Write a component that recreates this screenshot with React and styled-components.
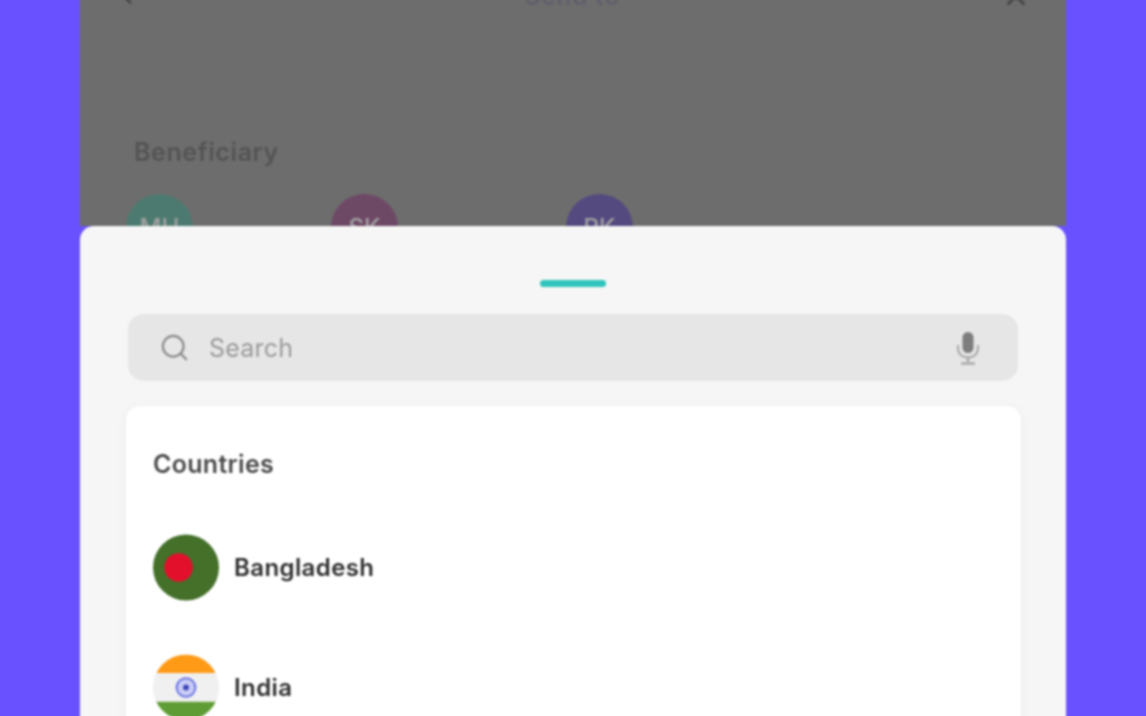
import React from 'react';
import styled, { createGlobalStyle } from 'styled-components';
import { ChevronLeft, Search, X } from 'lucide-react';

const GlobalStyle = createGlobalStyle`
    html, body {
        margin: 0;
        padding: 0;
        height: 716px;
        overflow: hidden;
        background: #6a51ff;
    }
    * {
        box-sizing: border-box;
    }
`;

const Page = styled.div`
    width: 1146px;
    height: 716px;
    overflow: hidden;
    background: #6a51ff;
    font-family: Inter, "Liberation Sans", sans-serif;
`;

/* taller than the page so the soft focus doesn't fringe the top and bottom edges */
const Stage = styled.div`
    height: 740px;
    margin-top: -12px;
    padding: 0 80px;
    background: #6a51ff;
    filter: blur(0.8px);
`;

const Phone = styled.div`
    width: 986px;
    height: 740px;
    display: flex;
    flex-direction: column;
`;

const Backdrop = styled.div`
    height: 238px;
    flex: none;
    overflow: hidden;
    background: #6d6d6d;
    padding: 0 35px 0 34px;
`;

const Header = styled.div`
    height: 24px;
    margin-top: -4px;
    display: flex;
    align-items: center;
    justify-content: space-between;
    color: #474747;
`;

const Title = styled.div`
    font-size: 24px;
    font-weight: 600;
    letter-spacing: 1px;
    color: #5f5f6b;
    margin-left: 4px;
`;

const SectionLabel = styled.div`
    margin: 129px 0 0 20px;
    font-size: 25px;
    line-height: 30px;
    font-weight: 600;
    letter-spacing: 0.6px;
    color: #545454;
`;

const Beneficiaries = styled.div`
    display: flex;
    margin: 27px 0 0 12px;
`;

const Avatar = styled.div`
    width: 67px;
    height: 67px;
    flex: none;
    margin-right: ${p => p.$gap}px;
    border-radius: 50%;
    background: ${p => p.$color};
    color: #a0a0a0;
    font-size: 24px;
    font-weight: 500;
    text-align: center;
    line-height: 67px;
`;

const Sheet = styled.div`
    flex: 1;
    background: #f6f6f6;
    border-radius: 14px 14px 0 0;
    padding: 54px 45px 0 46px;
`;

const Handle = styled.div`
    width: 66px;
    height: 7px;
    margin-left: 414px;
    border-radius: 4px;
    background: #2fc4bc;
`;

const SearchBar = styled.div`
    height: 67px;
    margin: 27px 3px 0 2px;
    padding: 0 36px 0 31px;
    display: flex;
    align-items: center;
    gap: 19px;
    border-radius: 16px;
    background: #e6e6e6;
    color: #8a8a8a;
`;

const Placeholder = styled.div`
    flex: 1;
    font-size: 25px;
    letter-spacing: 0.2px;
    color: #9a9a9a;
`;

const Card = styled.div`
    height: 340px;
    margin-top: 25px;
    padding: 43px 27px 0;
    border-radius: 14px;
    background: #ffffff;
    box-shadow: 0 2px 12px rgba(0, 0, 0, 0.05);
`;

const CardTitle = styled.div`
    font-size: 25px;
    line-height: 30px;
    font-weight: 600;
    letter-spacing: 0.3px;
    color: #4a4a4a;
`;

const CountryList = styled.div`
    display: flex;
    flex-direction: column;
    gap: 53px;
    margin-top: 55px;
`;

const Country = styled.div`
    display: flex;
    align-items: center;
    gap: 14px;
`;

const Flag = styled.svg`
    width: 66px;
    height: 67px;
    flex: none;
`;

const CountryName = styled.div`
    font-size: 24px;
    font-weight: 600;
    letter-spacing: 0.4px;
    margin-left: 1px;
    color: #2e2e2e;
`;

const BangladeshFlag = () => (
    <Flag viewBox="0 0 67 67">
        <circle cx="33.5" cy="33.5" r="33.5" fill="#44702a" />
        <circle cx="26" cy="33.5" r="14.5" fill="#e3102b" />
    </Flag>
);

const IndiaFlag = () => (
    <Flag viewBox="0 0 67 67">
        <defs>
            <clipPath id="india-clip">
                <circle cx="33.5" cy="33.5" r="33.5" />
            </clipPath>
        </defs>
        <g clipPath="url(#india-clip)">
            <rect width="67" height="19" fill="#ff9a17" />
            <rect y="19" width="67" height="29" fill="#f0f0f0" />
            <rect y="48" width="67" height="19" fill="#5f9c35" />
        </g>
        <circle cx="33.5" cy="33.5" r="9.500" fill="#c9cdf5" stroke="#6a72e0" strokeWidth="2" />
        <circle cx="33.5" cy="33.5" r="3" fill="#3f46b8" />
    </Flag>
);

const MicIcon = () => (
    <svg width="28" height="34" viewBox="0 0 28 34" fill="none">
        <rect x="8.5" y="1" width="11" height="21" rx="5.5" fill="#7d7d7d" />
        <path d="M4 14v3c0 6 4.500 9.500 10 9.500s10-3.500 10-9.500v-3" stroke="#a8a8a8" strokeWidth="2" />
        <path d="M14 27v4M7 32.500h14" stroke="#a8a8a8" strokeWidth="2.500" />
    </svg>
);

const App = () => {
    return (
        <>
            <GlobalStyle />
            <Page>
                <Stage>
                    <Phone>
                        <Backdrop>
                            <Header>
                                <ChevronLeft size={26} strokeWidth={2.5} />
                                <Title>Send to</Title>
                                <X size={30} strokeWidth={2.5} />
                            </Header>
                            <SectionLabel>Beneficiary</SectionLabel>
                            <Beneficiaries>
                                <Avatar $color="#4d7a70" $gap={138}>MH</Avatar>
                                <Avatar $color="#6e4966" $gap={168}>SK</Avatar>
                                <Avatar $color="#544a80" $gap={0}>RK</Avatar>
                            </Beneficiaries>
                        </Backdrop>
                        <Sheet>
                            <Handle />
                            <SearchBar>
                                <Search size={31} strokeWidth={1.7} />
                                <Placeholder>Search</Placeholder>
                                <MicIcon />
                            </SearchBar>
                            <Card>
                                <CardTitle>Countries</CardTitle>
                                <CountryList>
                                    <Country>
                                        <BangladeshFlag />
                                        <CountryName>Bangladesh</CountryName>
                                    </Country>
                                    <Country>
                                        <IndiaFlag />
                                        <CountryName>India</CountryName>
                                    </Country>
                                </CountryList>
                            </Card>
                        </Sheet>
                    </Phone>
                </Stage>
            </Page>
        </>
    );
};

export default App;
